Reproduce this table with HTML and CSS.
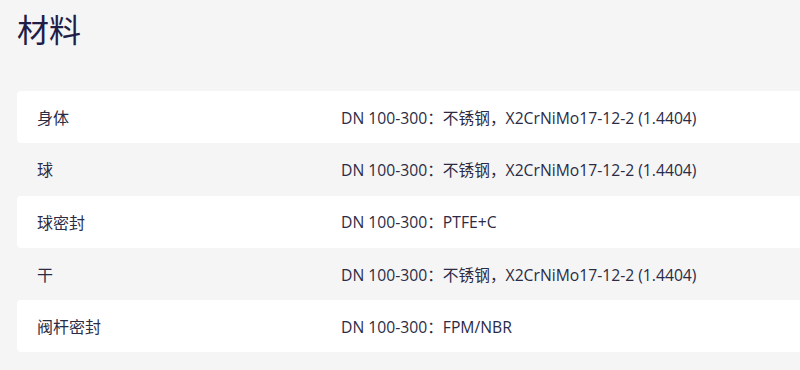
FILE: index.html
```html
<!DOCTYPE html>
<html lang="zh">
<head>
<meta charset="utf-8">
<link rel="stylesheet" href="styles.css">
</head>
<body>
<section class="materials">
  <h1 class="title">材料</h1>
  <div class="table">
    <div class="row">
      <div class="label">身体</div>
      <div class="value">DN 100-300：不锈钢，X2CrNiMo17-12-2 (1.4404)</div>
    </div>
    <div class="row">
      <div class="label">球</div>
      <div class="value">DN 100-300：不锈钢，X2CrNiMo17-12-2 (1.4404)</div>
    </div>
    <div class="row">
      <div class="label">球密封</div>
      <div class="value">DN 100-300：PTFE+C</div>
    </div>
    <div class="row">
      <div class="label">干</div>
      <div class="value">DN 100-300：不锈钢，X2CrNiMo17-12-2 (1.4404)</div>
    </div>
    <div class="row">
      <div class="label">阀杆密封</div>
      <div class="value">DN 100-300：FPM/NBR</div>
    </div>
  </div>
</section>
</body>
</html>
```
FILE: styles.css
```css
html, body {
  margin: 0;
  padding: 0;
  background: #f5f5f5;
  overflow: hidden;
}
body {
  font-family: "Open Sans", "Noto Sans CJK SC", sans-serif;
  color: #2b2b45;
}
.materials {
  padding: 0 0 0 17px;
}
.title {
  margin: 0;
  padding-top: 4px;
  height: 91px;
  box-sizing: border-box;
  font-family: "Noto Sans CJK SC", sans-serif;
  font-weight: 400;
  font-size: 32px;
  line-height: 48px;
  color: #1e1e48;
}
.table {
  width: calc(100% + 20px);
  display: flex;
  flex-direction: column;
}
.row {
  display: grid;
  grid-template-columns: 304px 1fr;
  align-items: center;
  height: 52.3px;
  padding: 0 20px;
  font-size: 16px;
  border-radius: 4px;
}
.row:nth-child(odd) {
  background: #ffffff;
}
.label {
  font-family: "Noto Sans CJK SC", sans-serif;
}
.value {
  font-size: 15.7px;
}
```
